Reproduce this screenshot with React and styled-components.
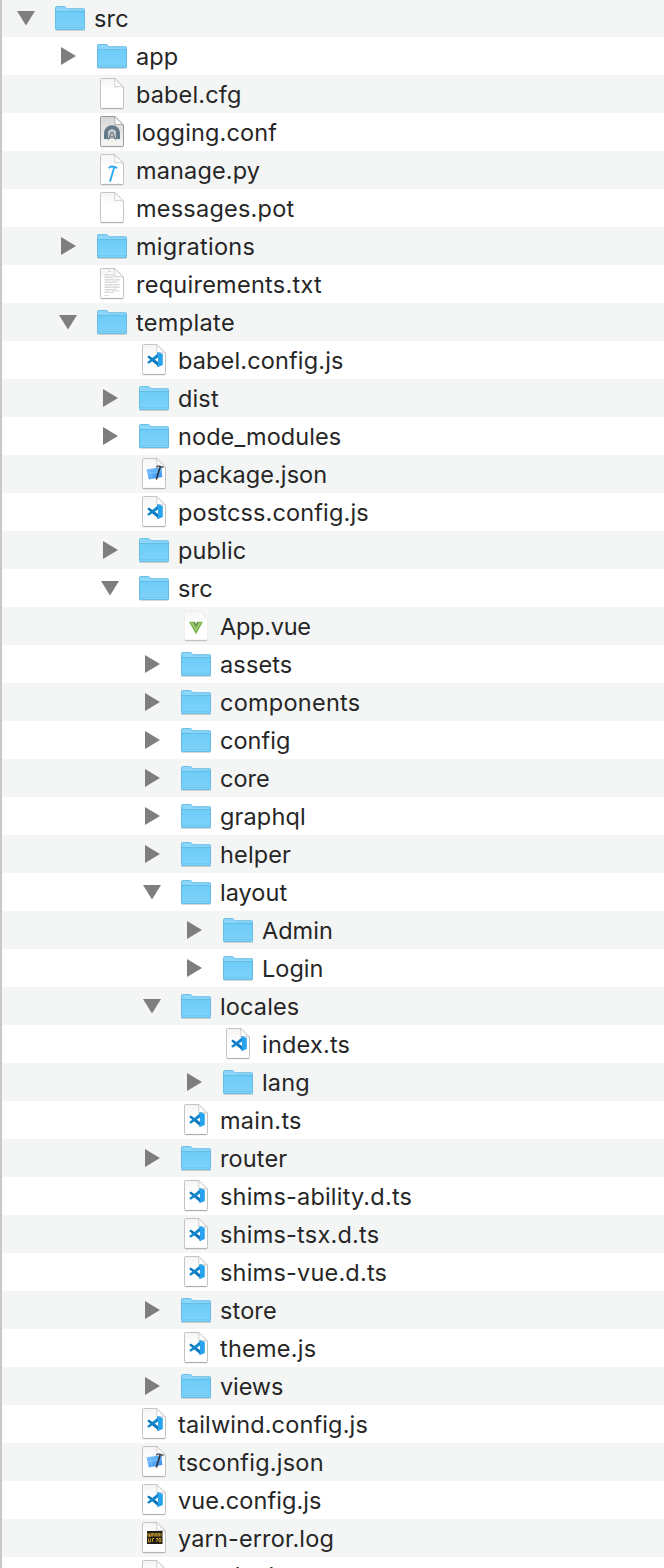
import React from "react";
import styled, { createGlobalStyle } from "styled-components";

const GlobalStyle = createGlobalStyle`
  html, body { margin: 0; padding: 0; background: #fff; }
  body { overflow: hidden; }
`;

const Outline = styled.main`
  box-sizing: border-box;
  width: 664px;
  height: 1568px;
  overflow: hidden;
  border-left: 2px solid #cbc7c9;
  background: #fff;
  font-family: Inter, "Liberation Sans", sans-serif;
  color: #262626;
`;

const List = styled.ul`
  margin: -1px 0 0;
  padding: 0;
  list-style: none;
`;

const Row = styled.li`
  display: flex;
  align-items: center;
  height: 38px;
  padding-left: ${({ $depth }) => 15 + $depth * 42}px;
  background: #fff;
  &:nth-child(odd) { background: #f4f5f5; }
`;

const Disclosure = styled.span`
  display: flex;
  flex: none;
  width: 36px;
  height: 38px;
`;

const IconSlot = styled.span`
  display: flex;
  flex: none;
  width: 34px;
  height: 38px;
  margin-right: 7px;
`;

const Name = styled.span`
  padding-top: 2px;
  font-size: 23.5px;
  line-height: 36px;
  letter-spacing: ${({ $tracking }) => $tracking}px;
  white-space: pre;
  ${Row}:last-child & { padding: 0 0 1px; }
`;

const Triangle = ({ open }) => (
  <svg width="22" height="38" viewBox="0 0 22 38">
    <path d={open ? "M0 12H18L9 26.5Z" : "M2 10V28L17 19Z"} fill="#7e7e7e" />
  </svg>
);

const Defs = () => (
  <svg width="0" height="0" style={{ display: "block" }}>
    <defs>
      <linearGradient id="folderFront" x1="0" y1="0" x2="0" y2="1">
        <stop offset="0" stopColor="#6dccf8" />
        <stop offset="1" stopColor="#7fd3fa" />
      </linearGradient>
      <linearGradient id="corner" x1="0" y1="1" x2="1" y2="0">
        <stop offset="0.35" stopColor="#fff" />
        <stop offset="1" stopColor="#e4e4e4" />
      </linearGradient>
      <linearGradient id="pageShade" x1="0" y1="0" x2="0" y2="1">
        <stop offset="0" stopColor="#f4f4f4" />
        <stop offset="0.4" stopColor="#fff" />
      </linearGradient>
      <linearGradient id="greyPage" x1="0" y1="0" x2="0" y2="1">
        <stop offset="0" stopColor="#d6d6d6" />
        <stop offset="1" stopColor="#f8f8f8" />
      </linearGradient>
      <linearGradient id="blueprint" x1="0" y1="0" x2="1" y2="1">
        <stop offset="0" stopColor="#7cc4ff" />
        <stop offset="1" stopColor="#348ff2" />
      </linearGradient>
    </defs>
  </svg>
);

const Folder = () => (
  <svg width="34" height="38" viewBox="0 0 34 38">
    <path d="M2.5 31.4H31.5" stroke="#000" strokeOpacity=".17" />
    <path d="M2 9Q2 7 4 7H10.5Q12 7 12.8 8L14 9.3H30.5Q32 9.3 32 10.8V29.5Q32 31 30.5 31H3.5Q2 31 2 29.5Z" fill="#8bd6f9" />
    <path d="M2 12.5H32V29.5Q32 31 30.5 31H3.5Q2 31 2 29.5Z" fill="url(#folderFront)" />
    <path d="M2.5 12.5H31.5" stroke="#5bb8e2" strokeWidth=".8" />
    <path d="M2.5 28.5H31.5" stroke="#69bfe6" strokeWidth=".6" />
    <path d="M2.5 9.5Q2.5 7.5 4 7.5H10.5Q11.7 7.5 12.5 8.4L14 9.8H30.5Q31.5 9.8 31.5 11V29.3Q31.5 30.5 30.3 30.5H3.7Q2.5 30.5 2.5 29.3Z" fill="none" stroke="#58afd8" strokeOpacity=".6" />
  </svg>
);

const glyphs = {
  conf: (
    <>
      <path d="M9 26V20A8 7.8 0 0 1 25 20V26H21V20.5A4 4 0 0 0 13 20.5V26Z" fill="#657a89" />
      <path d="M13 26V20.5A4 4 0 0 1 21 20.5V26Z" fill="#c3cace" />
      <path d="M12.5 26H14L16.2 19.5H17.8L20 26H21.5M15 24H19" fill="none" stroke="#56616a" strokeWidth=".9" />
    </>
  ),
  python: (
    <>
      <path d="M19 17L15.2 30" stroke="#2ba8f2" strokeWidth="1.9" strokeLinecap="round" />
      <path d="M13.8 17.2Q15.5 15 18.5 15.7L22.2 16.8" fill="none" stroke="#2ba8f2" strokeWidth="1.9" />
    </>
  ),
  text: (
    <path
      d="M13 6.5h3M9.5 9.5h5m1 0h3M9.5 11h7m1 0h2M9.5 12.5h9M9.5 14.5h10m1 0h4M9.5 16h6m1 0h8M9.5 17.5h12M9.5 19.5h8m1 0h6M9.5 21h12m1 0h2M9.5 22.5h7m1 0h7M9.5 24.5h12M9.5 26h6m1 0h8M9.5 27.5h9M9.5 30.5h4"
      fill="none"
      stroke="#c4c4c4"
      strokeWidth=".65"
    />
  ),
  code: (
    <>
      <path d="M10.1 15.9L11.8 14.4L22 21.8V26Z" fill="#0875bd" />
      <path d="M10.1 21.3L11.8 22.8L22 15.8V11.5Z" fill="#1286cd" />
      <path d="M21 11L25.8 13.1V24L21 26.1L19.9 25.2L21 23.7V13.6L19.9 12Z" fill="#2aa3ef" />
    </>
  ),
  json: (
    <>
      <path d="M9.5 14.2L24.5 12.2L25.3 22L11.8 24.6Z" fill="url(#blueprint)" />
      <path d="M13 14L14.5 24M10.3 18.5L24 16.5" stroke="#a9d8ff" strokeWidth=".4" />
      <path d="M23.2 12L19.3 24.6" stroke="#30343a" strokeWidth="1.7" />
      <path d="M19.2 12.4Q20.5 10.6 23 11.3L26.4 12.5" fill="none" stroke="#535961" strokeWidth="1.5" />
    </>
  ),
  vue: (
    <>
      <path d="M10 14.8H13.8L17 20.5L20.2 14.8H24L17 27.2Z" fill="#78b344" />
      <path d="M13.8 14.8H15.8L17 17L18.2 14.8H20.2L17 20.5Z" fill="#68963f" />
      <path d="M12.3 14.8L17 23.3L21.7 14.8" fill="none" stroke="#d8e9c9" strokeWidth=".6" />
    </>
  ),
  log: (
    <>
      <rect x="10" y="12" width="15.5" height="13" fill="#211f18" />
      <path d="M11 14V17.2H12.7V14.5V17.2H14.2V14M15.3 17.5V14.5H17V17.5M18.3 17.5V14.5H19.9V17.5M21 17.5V14.5H22.5V17.5M24 14.3V17.5M11.5 19.5V22.8H13.5V19.5M15.5 22.8V19.5H17M19 19.5H20.8L19.5 22.8M22 19.5V22.8H23.8V19.5H22" fill="none" stroke="#c59a27" strokeWidth="1" />
    </>
  ),
};

const Document = ({ kind }) => {
  const fill = kind === "conf" ? "url(#greyPage)" : "url(#pageShade)";
  const edge = kind === "vue" ? "#eeeeee" : kind === "conf" ? "#8f8f8f" : "#bdbdbd";
  return (
    <svg width="34" height="38" viewBox="0 0 34 38">
      <path d="M5.5 33.9H28.5" stroke="#000" strokeOpacity=".12" />
      <path d="M6.5 3.5H19.8L28.5 12.2V32.3Q28.5 33.5 27.3 33.5H6.7Q5.5 33.5 5.5 32.3V4.5Q5.5 3.5 6.5 3.5Z" fill={fill} stroke={edge} strokeWidth=".9" />
      <path d="M19.3 3.5Q20.4 7 19.8 12Q24.3 10.6 28.5 12.2L19.8 3.5Z" fill="url(#corner)" stroke={edge} strokeWidth=".7" />
      <path d="M6 33.4H28" stroke="#a9a9a9" strokeWidth=".7" />
      {glyphs[kind]}
    </svg>
  );
};

const trackingFor = {
  "App.vue": -0.25,
  "requirements.txt": 0.26,
  "messages.pot": 0.22,
  migrations: 0.26,
  template: 0.35,
  components: 0.25,
  core: 0,
  layout: 0.02,
  Admin: 0,
  Login: 0,
  config: 0.05,
  views: -0.1,
  node_modules: 0.08,
  "package.json": 0.08,
  "tsconfig.json": 0.22,
  "shims-ability.d.ts": 0.2,
  "shims-tsx.d.ts": 0.22,
  "shims-vue.d.ts": 0.2,
  "index.ts": 0.2,
  "main.ts": 0.25,
  "theme.js": 0.25,
  "vue.config.js": 0.06,
};

const entries = [
  [0, "src", "folder", "open"],
  [1, "app", "folder", "closed"],
  [1, "babel.cfg", "blank"],
  [1, "logging.conf", "conf"],
  [1, "manage.py", "python"],
  [1, "messages.pot", "blank"],
  [1, "migrations", "folder", "closed"],
  [1, "requirements.txt", "text"],
  [1, "template", "folder", "open"],
  [2, "babel.config.js", "code"],
  [2, "dist", "folder", "closed"],
  [2, "node_modules", "folder", "closed"],
  [2, "package.json", "json"],
  [2, "postcss.config.js", "code"],
  [2, "public", "folder", "closed"],
  [2, "src", "folder", "open"],
  [3, "App.vue", "vue"],
  [3, "assets", "folder", "closed"],
  [3, "components", "folder", "closed"],
  [3, "config", "folder", "closed"],
  [3, "core", "folder", "closed"],
  [3, "graphql", "folder", "closed"],
  [3, "helper", "folder", "closed"],
  [3, "layout", "folder", "open"],
  [4, "Admin", "folder", "closed"],
  [4, "Login", "folder", "closed"],
  [3, "locales", "folder", "open"],
  [4, "index.ts", "code"],
  [4, "lang", "folder", "closed"],
  [3, "main.ts", "code"],
  [3, "router", "folder", "closed"],
  [3, "shims-ability.d.ts", "code"],
  [3, "shims-tsx.d.ts", "code"],
  [3, "shims-vue.d.ts", "code"],
  [3, "store", "folder", "closed"],
  [3, "theme.js", "code"],
  [3, "views", "folder", "closed"],
  [2, "tailwind.config.js", "code"],
  [2, "tsconfig.json", "json"],
  [2, "vue.config.js", "code"],
  [2, "yarn-error.log", "log"],
  [2, "yarn.lock", "blank"],
];

export default function App() {
  return (
    <>
      <GlobalStyle />
      <Outline>
        <Defs />
        <List>
          {entries.map(([depth, name, kind, state], i) => (
            <Row key={i} $depth={depth}>
              <Disclosure>{state && <Triangle open={state === "open"} />}</Disclosure>
              <IconSlot>{kind === "folder" ? <Folder /> : <Document kind={kind} />}</IconSlot>
              <Name $tracking={trackingFor[name] ?? 0.14}>{name}</Name>
            </Row>
          ))}
        </List>
      </Outline>
    </>
  );
}
